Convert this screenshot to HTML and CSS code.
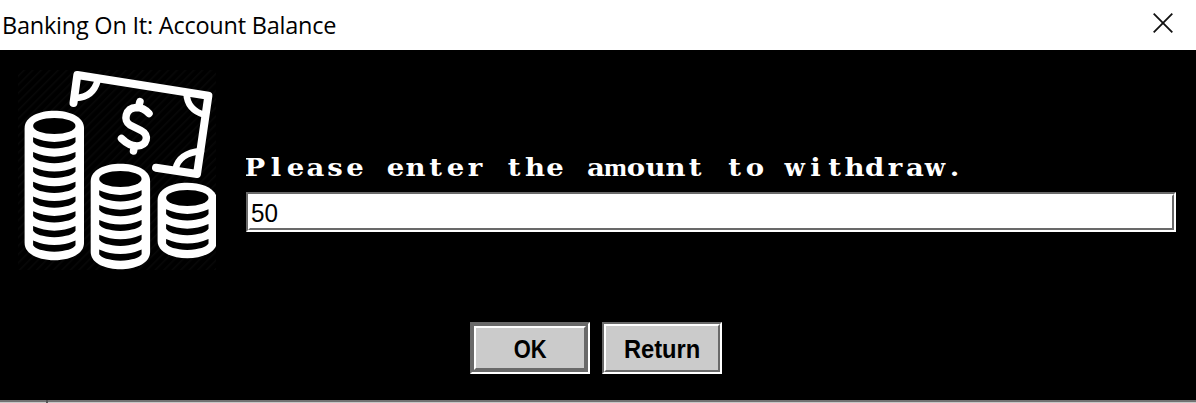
FILE: index.html
```html
<!DOCTYPE html>
<html lang="en">
<head>
<meta charset="utf-8">
<title>Banking On It: Account Balance</title>
<link rel="stylesheet" href="styles.css">
</head>
<body>
<div class="dialog">
  <header class="titlebar">
    <span class="title">Banking On It: Account Balance</span>
    <svg class="close" viewBox="0 0 20 20"><path d="M.7 .7 19.3 19.3M19.3 .7 .7 19.3"/></svg>
  </header>
  <main class="content">
    <svg class="money" viewBox="18 70 198 200">
      <defs>
        <pattern id="hatch" width="6" height="6" patternUnits="userSpaceOnUse" patternTransform="rotate(45)"><rect width="1.5" height="6" fill="#080808"/></pattern>
        <path id="slot" d="M-21.2 11.3Q0 20.5 21.2 11.3V16Q18 21.500 0 22.500Q-18 21.500 -21.2 16Z"/>
      </defs>
      <rect x="18" y="70" width="198" height="200" fill="url(#hatch)"/>
      <g class="bill">
        <path d="M73.5 103 77.3 75 208.4 95.7 197 174 156 167.7"/>
        <path class="arc" d="M97.5 81Q93 97 76 98M186.5 93Q187 110 205 115M175.5 169Q179 153 201 151"/>
        <path class="dollar" d="M149 113.5C145 109 141 107.5 136.500 107.500C125 108 123 121 130 125L141 130.500C150 135 147 145.500 137 146C130 146 126 143 121.500 138.500M140 101.500 138.500 107M134.500 146 133.500 151"/>
      </g>
      <g transform="translate(54.3 126)">
        <path class="coin" d="M-29.7 2C-29.7 -21 29.7 -21 29.7 2V117C29.700 140 -29.700 140 -29.700 117Z"/>
        <ellipse rx="21.2" ry="8"/>
        <use href="#slot"/><use href="#slot" y="14.8"/><use href="#slot" y="29.6"/><use href="#slot" y="44.4"/><use href="#slot" y="59.2"/><use href="#slot" y="74"/><use href="#slot" y="88.8"/><use href="#slot" y="103.200"/>
      </g>
      <g transform="translate(120.4 179)">
        <path class="coin" d="M-29.7 2C-29.7 -21 29.7 -21 29.7 2V73C29.700 96 -29.700 96 -29.700 73Z"/>
        <ellipse rx="21.2" ry="8"/>
        <use href="#slot"/><use href="#slot" y="14.8"/><use href="#slot" y="29.6"/><use href="#slot" y="44.4"/><use href="#slot" y="59.2"/>
      </g>
      <g transform="translate(187.3 198)">
        <path class="coin" d="M-29.7 2C-29.7 -21 29.7 -21 29.7 2V43C29.700 66 -29.700 66 -29.700 43Z"/>
        <ellipse rx="21.2" ry="8"/>
        <use href="#slot"/><use href="#slot" y="14.8"/><use href="#slot" y="29.6"/>
      </g>
    </svg>
    <div class="form">
      <svg class="prompt" viewBox="0 0 830.36 42" preserveAspectRatio="none"><text y="26" x="8 26.8 44.2 62.1 79.5 97.3 115.6 133.5 151.3 169.2 187.1 204.5 221.9 239.3 258 275.9 294.2 312.5 329.9 348.2 365.6 383.5 400.9 418.8 436.200 454.500 472.800 490 508.500 525.500 543.300 561.200 579.500 597.300 615.200 632.600">Please enter the a<tspan class="wide-m">m</tspan>ount to <tspan class="wide-w">w</tspan>ithdra<tspan class="wide-w">w</tspan>.</text></svg>
      <div class="field"><div class="field-inner"><span>50</span></div></div>
    </div>
  </main>
  <div class="actions">
    <div class="button ok"><div class="face"><span>OK</span></div></div>
    <div class="button"><div class="face"><span>Return</span></div></div>
  </div>
  <div class="edge"><i></i></div>
</div>
</body>
</html>
```
FILE: styles.css
```css
* { box-sizing: border-box; }
body { margin: 0; overflow: hidden; background: #000; }
.dialog { width: 1196px; height: 403px; display: flex; flex-direction: column; background: #000; }
.titlebar { height: 50px; flex: none; background: #fff; display: flex; justify-content: space-between; align-items: flex-start; padding: 8px 23px 0 2px; }
.title { font: 23.5px/34px "Open Sans", sans-serif; color: #000; letter-spacing: -0.23px; white-space: nowrap; }
.close { width: 20px; height: 20px; margin-top: 5px; }
.close path { stroke: #111; stroke-width: 1.8; fill: none; }
.content { display: flex; gap: 30px; padding: 20px 20px 0 18px; height: 272px; flex: none; }
.money { width: 198px; height: 200px; flex: none; }
.money .bill path { fill: none; stroke: #fff; stroke-width: 8; stroke-linecap: round; stroke-linejoin: round; }
.money .bill .arc { stroke-width: 6.5; }
.money .bill .dollar { stroke-width: 7.5; }
.coin { fill: #fff; }
.form { flex: 1; padding-top: 80px; display: flex; flex-direction: column; }
.prompt { width: 930px; height: 42px; flex: none; }
.prompt text { font: bold 24.6px "DejaVu Serif", serif; fill: #fff; text-anchor: middle; white-space: pre; }
.prompt .wide-m { font: bold 24.5px "Liberation Serif", serif; }
.prompt .wide-w { font-size: 23.5px; font-stretch: condensed; }
.field { height: 40px; flex: none; border: 2px solid; border-color: #696969 #fff #fff #696969; background: #fff; }
.field-inner { height: 36px; border: 2px solid; border-color: #fff #696969 #696969 #fff; padding-left: 1px; }
.field span { display: inline-block; font: 25.500px/34px "Liberation Sans", sans-serif; color: #000; transform: scaleX(.95); transform-origin: left; }
.actions { display: flex; justify-content: center; gap: 12px; height: 78px; flex: none; padding-right: 4px; }
.button { width: 120px; height: 52px; border: 2px solid; border-color: #696969 #fff #fff #696969; }
.face { height: 100%; border: 2px solid; border-color: #fff #696969 #696969 #fff; background: #cbcbcb; display: flex; justify-content: center; }
.face span { font: bold 25.500px/46px "Liberation Sans", sans-serif; color: #000; transform: scaleX(.93); }
.ok { background: #696969; padding: 2px; }
.ok .face span { transform: scaleX(.86); line-height: 42px; }
.edge { height: 3px; flex: none; background: linear-gradient(#727272 0 2px, #c8c8c8 2px); padding-left: 46px; }
.edge i { display: block; width: 2px; height: 3px; background: #555; }
```
